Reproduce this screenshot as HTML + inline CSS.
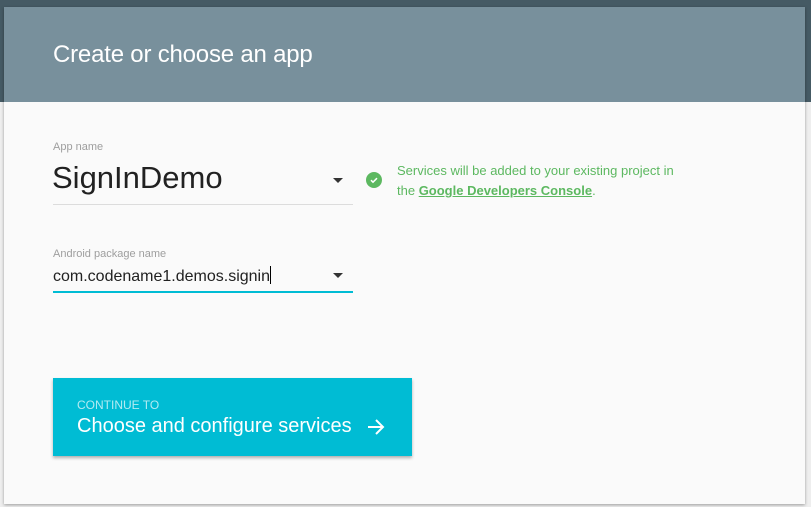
<!DOCTYPE html>
<html><head><style>
*{margin:0;padding:0;box-sizing:border-box}
body{width:811px;height:507px;overflow:hidden;background:#eeeeee;font-family:"Liberation Sans",sans-serif;position:relative}
.topbg{position:absolute;left:0;top:0;width:811px;height:102px;background:#455a64}
.card{position:absolute;left:4px;top:7px;width:801px;height:497px;background:#fafafa;box-shadow:0 1px 3px rgba(0,0,0,.35)}
.hdr{position:absolute;left:0;top:0;width:801px;height:95px;background:#78909c}
.hdr h1{position:absolute;left:49px;top:34px;font-weight:normal;font-size:24px;color:#fff;letter-spacing:-0.2px}
.lbl{position:absolute;font-size:11px;color:#9e9e9e}
.val{position:absolute;color:#212121}
.line{position:absolute;left:49px;width:300px}
.tri{position:absolute;width:0;height:0;border-left:5px solid transparent;border-right:5px solid transparent;border-top:5px solid #333}
.msg{position:absolute;left:393px;top:154px;font-size:13px;line-height:20px;color:#5cb860;width:305px}
.msg a{color:#5cb860;font-weight:bold;text-decoration:underline}
.chk{position:absolute;left:362px;top:165px;width:16px;height:16px;border-radius:50%;background:#5cb860}
.btn{position:absolute;left:49px;top:371px;width:359px;height:78px;background:#00bcd4;box-shadow:0 2px 3px rgba(0,0,0,.3);color:#fff}
</style></head><body>
<div class="topbg"></div>
<div class="card">
 <div class="hdr"><h1>Create or choose an app</h1></div>
 <div class="lbl" style="left:49px;top:134px">App name</div>
 <div class="val" style="left:48px;top:153px;font-size:31px">SignInDemo</div>
 <div class="tri" style="left:329px;top:171px"></div>
 <div class="line" style="top:197px;height:1px;background:#dcdcdc"></div>
 <div class="chk"><svg width="16" height="16" viewBox="0 0 16 16"><path d="M5 8.2l2 2 4-4" stroke="#fff" stroke-width="1.5" fill="none"/></svg></div>
 <div class="msg">Services will be added to your existing project in<br>the <a>Google Developers Console</a>.</div>
 <div class="lbl" style="left:49px;top:241px">Android package name</div>
 <div class="val" style="left:49px;top:259px;font-size:16px">com.codename1.demos.signin<span style="display:inline-block;width:1px;height:18px;background:#000;vertical-align:-3px"></span></div>
 <div class="tri" style="left:329px;top:266px"></div>
 <div class="line" style="top:284px;height:2px;background:#00bcd4"></div>
 <div class="btn">
  <div style="position:absolute;left:24px;top:20px;font-size:12px;color:#b2ebf2">CONTINUE TO</div>
  <div style="position:absolute;left:24px;top:37px;font-size:20px">Choose and configure services</div>
  <svg style="position:absolute;left:313px;top:39px" width="20" height="20" viewBox="0 0 20 20"><path d="M2 10h15M10 3l7 7-7 7" stroke="#fff" stroke-width="2" fill="none"/></svg>
 </div>
</div>
</body></html>
